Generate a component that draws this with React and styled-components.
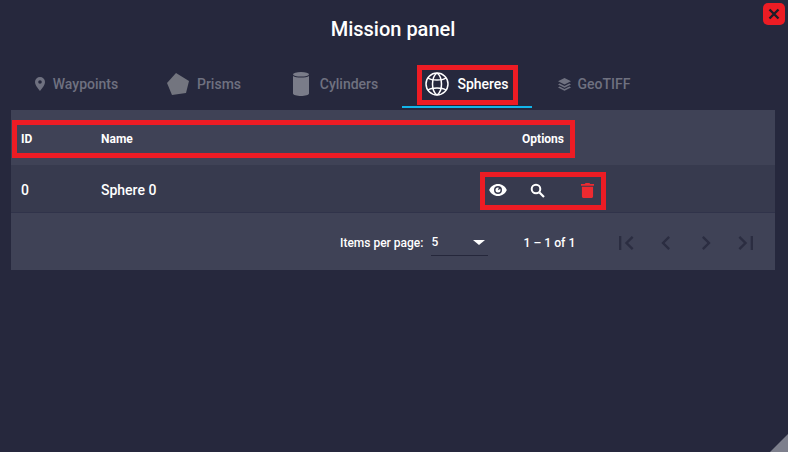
import React from "react";
import styled, { createGlobalStyle } from "styled-components";

const Global = createGlobalStyle`
  html, body { margin: 0; padding: 0; height: 100%; background: #26283d; }
  body { font-family: Roboto, "Liberation Sans", sans-serif; overflow: hidden; }
`;
const Page = styled.div`
  position: relative; width: 788px; height: 452px; background: #26283d; overflow: hidden;
  display: flex; flex-direction: column;
`;
const Title = styled.h1`
  margin: 0; height: 59px; padding: 17px 2px 0 0; box-sizing: border-box; text-align: center;
  font-size: 20px; line-height: 24px; font-weight: 500; color: #fff;
`;
const Close = styled.button`
  position: absolute; top: 3px; right: 3px; width: 22px; height: 22px; padding: 0; border: 0;
  border-radius: 5px; background: #ed1c24; display: flex; align-items: center; justify-content: center;
`;
const Tabs = styled.div`
  display: flex; height: 49px; padding-left: 12px;
`;
const Tab = styled.div`
  width: 130px; height: 49px; box-sizing: border-box; display: flex; align-items: center; justify-content: center;
  gap: ${p => p.$gap || 6}px; padding: 3px ${p => p.$shift || 0}px 0 0;
  font-size: 14px; font-weight: 500; color: ${p => p.$active ? "#fff" : "#6f7180"};
  border-bottom: 2px solid ${p => p.$active ? "#12b5ea" : "transparent"};
`;
const Table = styled.div`
  margin: 2px 13px 0 11px; display: flex; flex-direction: column;
`;
const Head = styled.div`
  height: 55px; background: #3f4256; display: grid; grid-template-columns: 80px 1fr auto; align-items: center;
  padding: 2px 211px 0 10px; box-sizing: border-box; font-size: 12px; font-weight: 700; color: #fff;
`;
const Row = styled.div`
  height: 48px; background: #373a4e; border-bottom: 1px solid #30334a; box-sizing: border-box;
  display: grid; grid-template-columns: 80px 1fr 124px; align-items: center;
  padding: 3px 170px 0 10px;
  font-size: 14px; font-weight: 500; color: #fff;
`;
const Actions = styled.div`
  display: flex; align-items: center; height: 24px; padding-left: 8px;
`;
const Action = styled.span`
  display: flex; flex: none; width: ${p => p.$w}px;
`;
const Footer = styled.div`
  height: 57px; background: #3f4256; display: flex; align-items: center; box-sizing: border-box;
  padding: 2px 0 0 329px; font-size: 12px; font-weight: 500; color: #fff;
`;
const PerPage = styled.span`margin-right: 8px;`;
const Select = styled.div`
  width: 57px; height: 26px; box-sizing: border-box; border-bottom: 1px solid #25273b;
  display: flex; align-items: center; justify-content: space-between; padding-right: 3px; margin-right: 35px;
`;
const Arrow = styled.span`
  width: 0; height: 0; border-left: 6px solid transparent; border-right: 6px solid transparent;
  border-top: 5px solid #fff;
`;
const Range = styled.span`width: 51px; margin-right: 38px; white-space: nowrap; font-size: 12.200px;`;
const Pager = styled.div`display: flex; gap: 12px;`;
const PageBtn = styled.span`display: flex; width: 28px; height: 28px; color: #2b2d41;`;
const Mark = styled.div`
  position: absolute; border: 5px solid #ed1c24; box-sizing: border-box;
  left: ${p => p.$l}px; top: ${p => p.$t}px; width: ${p => p.$w}px; height: ${p => p.$h}px;
`;
const Grip = styled.svg`position: absolute; right: 0; bottom: 0;`;

const Pin = () => (
  <svg width="14" height="16" viewBox="0 0 14 16" fill="#6f7180"><path fillRule="evenodd" d="M7 1a5 5 0 0 0-5 5c0 3.600 5 9 5 9s5-5.400 5-9a5 5 0 0 0-5-5Zm0 6.800A1.800 1.800 0 1 1 7 4.200a1.800 1.800 0 0 1 0 3.600Z"/></svg>
);
const Pentagon = () => (
  <svg width="22" height="22" viewBox="0 0 22 22" fill="#73757f"><path d="M9 0 22 8 19 20 5 22 0 10Z"/></svg>
);
const Cylinder = () => (
  <svg width="16" height="24" viewBox="0 0 16 24" fill="#7a7c89"><ellipse cx="8" cy="2.300" rx="8" ry="2.300"/><path d="M0 4c3 2 13 2 16 0v17.500c0 3.300-16 3.300-16 0Z"/></svg>
);
const Globe = () => (
  <svg width="24" height="24" viewBox="0 0 24 24" fill="none" stroke="#fff" strokeWidth="1.500"><circle cx="12" cy="12" r="11"/><path d="M12 1C6 5 6 19 12 23M12 1C18 5 18 19 12 23"/><path d="M3 6c4 2.800 14 2.800 18 0M3 18c4-2.800 14-2.800 18 0"/></svg>
);
const Layers = () => (
  <svg width="15" height="15" viewBox="0 0 15 15" fill="#6f7180"><path d="M7.500 1 14 4.300 7.500 7.600 1 4.300Z"/><path d="M2.600 6.400 1 7.400l6.500 3.300L14 7.400l-1.600-1-4.900 2.500Z"/><path d="M2.600 9.500 1 10.500l6.500 3.300 6.500-3.300-1.600-1-4.900 2.500Z"/></svg>
);
const Eye = () => (
  <svg width="18" height="12" viewBox="0 0 18 12" fill="#fff"><path fillRule="evenodd" d="M9 0C5 0 1.600 2.500.2 6 1.600 9.500 5 12 9 12s7.400-2.500 8.800-6C16.400 2.500 13 0 9 0Zm0 10a4 4 0 1 1 0-8 4 4 0 0 1 0 8Z"/><path d="M9 3.500a2.500 2.500 0 1 0 2.500 2.500c0-.4-.1-.8-.3-1.100L8.900 6.200 9.800 3.700A2.500 2.500 0 0 0 9 3.500Z"/></svg>
);
const Search = () => (
  <svg width="15" height="15" viewBox="0 0 15 15" fill="none" stroke="#fff"><circle cx="6" cy="6" r="4.300" strokeWidth="2"/><path d="m9.500 9.500 4.500 4.500" strokeWidth="2.200"/></svg>
);
const Trash = () => (
  <svg width="13" height="15" viewBox="0 0 14 16" fill="#ed2a30"><path d="M5 0h4l1 1h4v2H0V1h4ZM1 4h12v10.500a1.500 1.500 0 0 1-1.500 1.500h-9A1.500 1.500 0 0 1 1 14.500Z"/></svg>
);
const PagerIcon = ({ d }) => (
  <svg width="28" height="28" viewBox="0 0 24 24" fill="currentColor"><path d={d}/></svg>
);

const icons = {
  first: "M18.410 16.590 13.820 12l4.590-4.590L17 6l-6 6 6 6ZM6 6h2v12H6Z",
  prev: "M15.410 7.410 14 6l-6 6 6 6 1.410-1.410L10.830 12Z",
  next: "M10 6 8.590 7.410 13.170 12l-4.580 4.590L10 18l6-6Z",
  last: "M5.590 7.410 10.180 12l-4.590 4.590L7 18l6-6-6-6ZM16 6h2v12h-2Z",
};

export default function App() {
  return (
    <Page>
      <Global />
      <Title>Mission panel</Title>
      <Close aria-label="Close">
        <svg width="12" height="12" viewBox="0 0 12 12" stroke="#1d1d28" strokeWidth="2.400"><path d="m1.500 1.500 9 9M10.500 1.500l-9 9"/></svg>
      </Close>
      <Tabs>
        <Tab $shift={3}><Pin />Waypoints</Tab>
        <Tab $gap={8} $shift={6}><Pentagon />Prisms</Tab>
        <Tab $gap={11} $shift={3}><Cylinder />Cylinders</Tab>
        <Tab $active $gap={8}><Globe />Spheres</Tab>
        <Tab $shift={7}><Layers />GeoTIFF</Tab>
      </Tabs>
      <Table>
        <Head><span>ID</span><span>Name</span><span>Options</span></Head>
        <Row>
          <span>0</span>
          <span>Sphere 0</span>
          <Actions>
            <Action $w={41}><Eye /></Action>
            <Action $w={51}><Search /></Action>
            <Action $w={13}><Trash /></Action>
          </Actions>
        </Row>
        <Footer>
          <PerPage>Items per page:</PerPage>
          <Select><span>5</span><Arrow /></Select>
          <Range>1 – 1 of 1</Range>
          <Pager>
            <PageBtn><PagerIcon d={icons.first} /></PageBtn>
            <PageBtn><PagerIcon d={icons.prev} /></PageBtn>
            <PageBtn><PagerIcon d={icons.next} /></PageBtn>
            <PageBtn><PagerIcon d={icons.last} /></PageBtn>
          </Pager>
        </Footer>
      </Table>
      <Mark $l={417} $t={65} $w={101} $h={40} />
      <Mark $l={12} $t={120} $w={563} $h={38} />
      <Mark $l={480} $t={172} $w={126} $h={38} />
      <Grip width="18" height="18" viewBox="0 0 18 18"><path d="M18 0v18H0Z" fill="#7d7f8c"/></Grip>
    </Page>
  );
}
